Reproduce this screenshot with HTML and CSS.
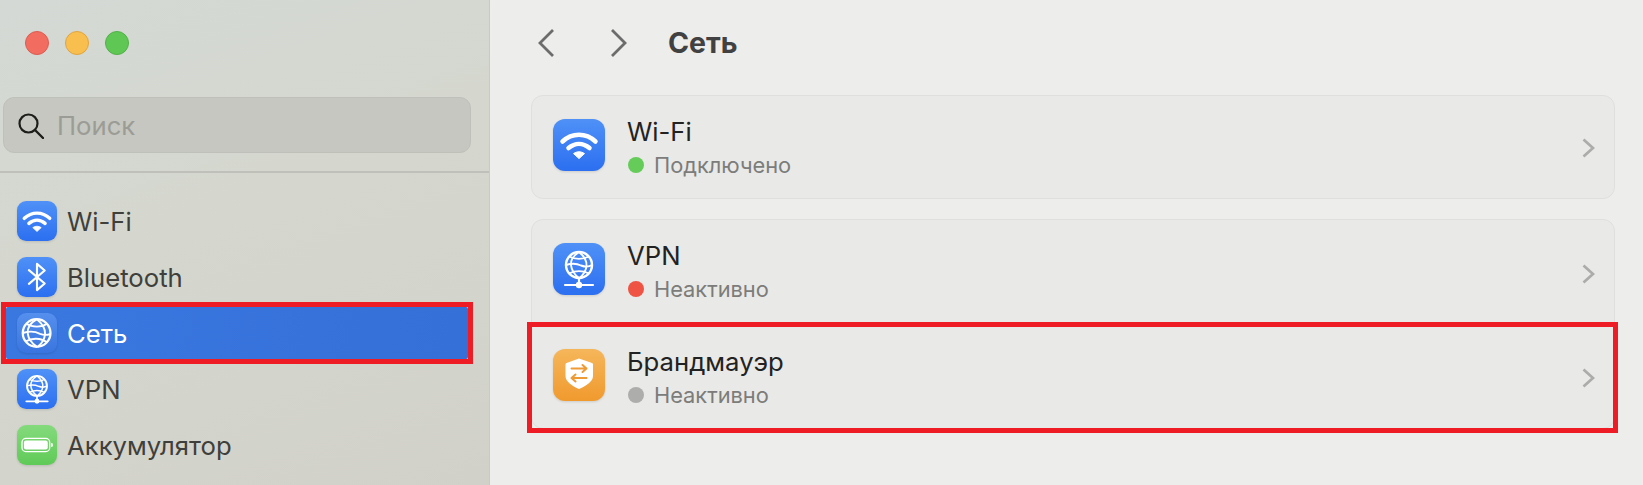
FILE: index.html
```html
<!DOCTYPE html>
<html lang="ru">
<head>
<meta charset="utf-8">
<title>Сеть</title>
<link rel="stylesheet" href="styles.css">
</head>
<body>
<svg class="defs" width="0" height="0" aria-hidden="true">
  <defs>
    <linearGradient id="blue" x1="0" y1="0" x2="0" y2="1"><stop offset="0" stop-color="#4f91f7"/><stop offset="1" stop-color="#2c6ff0"/></linearGradient>
    <linearGradient id="blue-soft" x1="0" y1="0" x2="0" y2="1"><stop offset="0" stop-color="#5590ee"/><stop offset="1" stop-color="#3a75df"/></linearGradient>
    <linearGradient id="green" x1="0" y1="0" x2="0" y2="1"><stop offset="0" stop-color="#84da7c"/><stop offset="1" stop-color="#5fca57"/></linearGradient>
    <linearGradient id="orange" x1="0" y1="0" x2="0" y2="1"><stop offset="0" stop-color="#f5b65a"/><stop offset="1" stop-color="#f09a2e"/></linearGradient>
    <symbol id="i-wifi" viewBox="0 0 52 52">
      <rect width="52" height="52" rx="12" fill="url(#blue)"/>
      <g fill="none" stroke="#fff" stroke-width="4.500" stroke-linecap="round">
        <path d="M9.500 22.500C19 13.500 33 13.500 42.500 22.500"/>
        <path d="M15.500 29C22 23.500 30 23.500 36.500 29"/>
      </g>
      <path d="M20.500 34.600C24 32.200 28 32.200 31.500 34.600L26 39.600Z" fill="#fff" stroke="#fff" stroke-linejoin="round"/>
    </symbol>
    <symbol id="i-bt" viewBox="0 0 52 52">
      <rect width="52" height="52" rx="12" fill="url(#blue)"/>
      <path d="M15.500 17L36 34.500L26 43V9L36 17.500L15.500 35" fill="none" stroke="#fff" stroke-width="2.800" stroke-linejoin="round" stroke-linecap="round"/>
    </symbol>
    <symbol id="i-globe" viewBox="0 0 52 52">
      <rect width="52" height="52" rx="12" fill="url(#blue-soft)"/>
      <g fill="none" stroke="#fff" stroke-width="2.500">
        <circle cx="25.500" cy="26" r="18" stroke-width="3"/>
        <path d="M26 8C17 13 13 20 14 27C15 34 20 40 26 44"/>
        <path d="M26 8C33 14 37 20 36.500 27C36 34 32 40 27 44"/>
        <path d="M12 14C20 19 32 19 39 14"/>
        <path d="M8 26C17 23 24 24 30 27C35 29 39 29 43.500 27"/>
        <path d="M11 37C19 32 31 32 39 38"/>
      </g>
    </symbol>
    <symbol id="i-vpn" viewBox="0 0 52 52">
      <rect width="52" height="52" rx="12" fill="url(#blue)"/>
      <g fill="none" stroke="#fff" stroke-width="1.900">
        <circle cx="26" cy="22" r="13" stroke-width="2.400"/>
        <path d="M26 9C20 13 17.500 18 18 22C18.500 27 22 32 26 35"/>
        <path d="M26 9C31 13 34 18 33.500 23C33 28 30 32 26.500 35"/>
        <path d="M16 13.500C22 16.500 30 16.500 36 13.500"/>
        <path d="M13 22C19 20 24 20.500 28 22.500C32 24 36 24 39 22"/>
        <path d="M16 30.500C22 27.500 30 27.500 36 30.500"/>
      </g>
      <path d="M26 35V42M12 42H40" stroke="#fff" stroke-width="2.200" stroke-linecap="round" fill="none"/>
      <circle cx="26" cy="42" r="3.200" fill="#fff"/>
    </symbol>
    <symbol id="i-battery" viewBox="0 0 52 52">
      <rect width="52" height="52" rx="12" fill="url(#green)"/>
      <rect x="6.500" y="17.500" width="36" height="17" rx="5" fill="none" stroke="#fff" stroke-width="1.700"/>
      <rect x="9" y="20" width="31" height="12" rx="2.800" fill="#fff"/>
      <path d="M45 23.500C46.500 24 46.500 28 45 28.500Z" fill="#fff" stroke="#fff"/>
    </symbol>
    <symbol id="i-shield" viewBox="0 0 52 52">
      <rect width="52" height="52" rx="12" fill="url(#orange)"/>
      <path d="M26 9.500L39 14C39.600 14.200 40 14.700 40 15.400V27C40 33 32 37.500 26 40C20 37.500 12.500 33 12.500 27V15.400C12.500 14.700 12.900 14.200 13.500 14Z" fill="#fff"/>
      <g fill="none" stroke="#ee9a35" stroke-width="2" stroke-linecap="round" stroke-linejoin="round">
        <path d="M18.500 19.500H33.500M29.500 16L33.500 19.500L29.500 23"/>
        <path d="M33.500 29H18.500M22.500 25.500L18.500 29L22.500 32.500"/>
      </g>
    </symbol>
    <symbol id="i-next" viewBox="0 0 13 20">
      <path d="M1.500 1.500L11 10L1.500 18.500" fill="none" stroke="currentColor" stroke-width="2.800"/>
    </symbol>
  </defs>
</svg>

<div class="window">
  <aside class="sidebar">
    <div class="traffic">
      <span class="light light-red"></span>
      <span class="light light-yellow"></span>
      <span class="light light-green"></span>
    </div>
    <div class="search">
      <svg class="search-icon" viewBox="0 0 26 26" aria-hidden="true">
        <circle cx="10.500" cy="10.500" r="9" fill="none" stroke="#1d1d1b" stroke-width="2.200"/>
        <path d="M17 17L25 25" stroke="#1d1d1b" stroke-width="2.400" stroke-linecap="round"/>
      </svg>
      <span class="search-text">Поиск</span>
    </div>
    <div class="separator"></div>
    <nav class="nav">
      <div class="nav-item"><svg class="nav-icon"><use href="#i-wifi"/></svg><span>Wi-Fi</span></div>
      <div class="nav-item"><svg class="nav-icon"><use href="#i-bt"/></svg><span>Bluetooth</span></div>
      <div class="nav-item nav-selected"><svg class="nav-icon"><use href="#i-globe"/></svg><span>Сеть</span></div>
      <div class="nav-item"><svg class="nav-icon"><use href="#i-vpn"/></svg><span>VPN</span></div>
      <div class="nav-item"><svg class="nav-icon"><use href="#i-battery"/></svg><span>Аккумулятор</span></div>
    </nav>
  </aside>

  <main class="main">
    <header class="header">
      <svg class="arrow" viewBox="0 0 16 28" aria-hidden="true"><path d="M15 1L2 14L15 27" fill="none" stroke="#6c6c6c" stroke-width="2.800"/></svg>
      <svg class="arrow arrow-next" viewBox="0 0 16 28" aria-hidden="true"><path d="M1 1L14 14L1 27" fill="none" stroke="#6c6c6c" stroke-width="2.800"/></svg>
      <h1 class="title">Сеть</h1>
    </header>

    <section class="card">
      <div class="row">
        <div class="row-body">
          <svg class="row-icon"><use href="#i-wifi"/></svg>
          <div class="row-text">
            <div class="row-name">Wi-Fi</div>
            <div class="row-status"><span class="dot dot-green"></span>Подключено</div>
          </div>
        </div>
        <svg class="chevron"><use href="#i-next"/></svg>
      </div>
    </section>

    <section class="card">
      <div class="row row-tall">
        <div class="row-body">
          <svg class="row-icon"><use href="#i-vpn"/></svg>
          <div class="row-text">
            <div class="row-name">VPN</div>
            <div class="row-status"><span class="dot dot-red"></span>Неактивно</div>
          </div>
        </div>
        <svg class="chevron"><use href="#i-next"/></svg>
      </div>
      <div class="row row-marked">
        <div class="row-body">
          <svg class="row-icon"><use href="#i-shield"/></svg>
          <div class="row-text">
            <div class="row-name">Брандмауэр</div>
            <div class="row-status"><span class="dot dot-gray"></span>Неактивно</div>
          </div>
        </div>
        <svg class="chevron"><use href="#i-next"/></svg>
      </div>
    </section>
  </main>
</div>
</body>
</html>
```
FILE: styles.css
```css
* { box-sizing: border-box; }

html, body {
  margin: 0;
  height: 485px;
  overflow: hidden;
}

body {
  font-family: Inter, "Liberation Sans", sans-serif;
  background: #edEDEB;
}

.defs { position: absolute; }

.window {
  display: flex;
  height: 485px;
}

/* Sidebar */
.sidebar {
  flex: 0 0 490px;
  background: linear-gradient(160deg, #d4d9d5 0%, #d5d7ce 45%, #d1d1c9 100%);
  border-right: 1px solid #c9cac4;
}

.traffic {
  display: flex;
  gap: 16px;
  padding: 31px 0 0 25px;
  height: 97px;
}

.light {
  width: 24px;
  height: 24px;
  border-radius: 50%;
  border: 1px solid;
}
.light-red { background: #f26d60; border-color: #dd5b50; }
.light-yellow { background: #f8bf4f; border-color: #e0a43f; }
.light-green { background: #5fc854; border-color: #52b048; }

.search {
  display: flex;
  align-items: center;
  width: 468px;
  height: 56px;
  margin-left: 3px;
  padding-left: 14px;
  background: #c6c7c0;
  border: 1px solid #bfc0b9;
  border-radius: 11px;
}

.search-icon {
  width: 26px;
  height: 26px;
  margin-top: 1px;
}

.search-text {
  margin: 1px 0 0 13px;
  font-size: 25.700px;
  color: #9b9c96;
}

.separator {
  height: 2px;
  margin-top: 18px;
  background: #bfc0b9;
}

.nav {
  display: flex;
  flex-direction: column;
  gap: 4px;
  width: 462px;
  margin: 22px 0 0 6px;
}

.nav-item {
  position: relative;
  display: flex;
  align-items: center;
  gap: 10px;
  height: 52px;
  flex: none;
  padding-left: 11px;
  font-size: 25.700px;
  color: #3f3f3b;
}

.nav-item span { margin-top: 1px; }

.nav-icon {
  width: 40px;
  height: 40px;
  flex: none;
  filter: drop-shadow(0 1px 1px rgba(0, 0, 0, .12));
}

.nav-selected {
  color: #fff;
  background: linear-gradient(100deg, #3a78e0, #356fd8);
  border-radius: 2px;
}

.nav-selected::after {
  content: "";
  position: absolute;
  inset: -5px;
  border: 5px solid #ee1c25;
}

/* Main */
.main {
  flex: 1;
  min-width: 0;
  padding: 0 28px 0 41px;
}

.header {
  display: flex;
  align-items: center;
  height: 95px;
  padding: 0 0 9px 7px;
}

.arrow {
  width: 16px;
  height: 28px;
}

.arrow-next { margin-left: 57px; }

.title {
  margin: -2px 0 0 41px;
  font-size: 28.500px;
  font-weight: 700;
  color: #414141;
}

.card {
  margin-bottom: 20px;
  background: #e9e9e7;
  border: 1px solid #dfdfdd;
  border-radius: 12px;
}

.row {
  position: relative;
  display: flex;
  justify-content: space-between;
  height: 102px;
  padding: 0 19px 0 21px;
}

.row-tall { height: 106px; }

.row-marked::after {
  content: "";
  position: absolute;
  inset: -4px -4px -5px -5px;
  border: 5px solid #ee1c25;
}

.row-body {
  display: flex;
  gap: 22px;
  padding-top: 21px;
}

.row-icon {
  width: 52px;
  height: 52px;
  margin-top: 2px;
  filter: drop-shadow(0 1px 1px rgba(0, 0, 0, .12));
}

.row-name {
  height: 30px;
  line-height: 30px;
  font-size: 25.700px;
  color: #222;
}

.row-status {
  display: flex;
  align-items: center;
  gap: 10px;
  height: 30px;
  margin-top: 3px;
  padding-left: 1px;
  font-size: 21.800px;
  color: #7c7c7a;
}

.dot {
  width: 16px;
  height: 16px;
  border-radius: 50%;
}
.dot-green { background: #65cc5a; }
.dot-red { background: #ee5344; }
.dot-gray { background: #adadab; }

.chevron {
  align-self: center;
  width: 13px;
  height: 20px;
  margin-top: 1px;
  color: #acacaa;
}
```
